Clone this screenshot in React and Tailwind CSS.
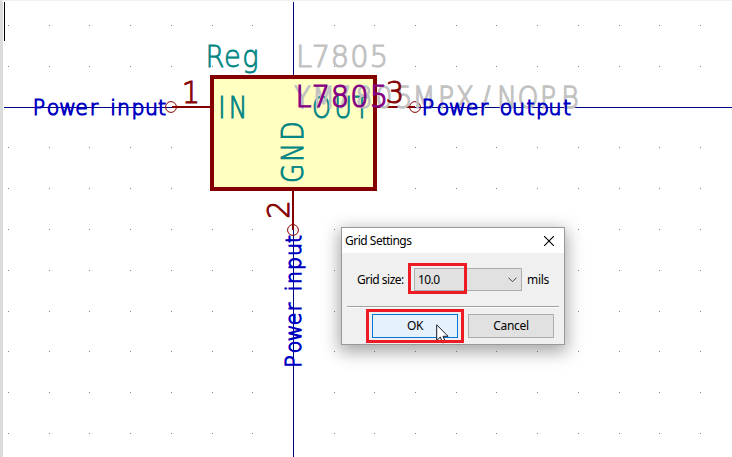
const GRID_COLS = Array.from({ length: 18 }, (_, i) => Math.round(8 + i * 40.7));
const GRID_ROWS = [25, 66, 147, 188, 229, 270, 311, 351, 392, 433];

// Lettering with one centre coordinate per character, run along the x axis
// or, when vertical, upwards along the y axis.
function Lettering({ text, at, base, color, size = 31, weight = 1, vertical = false, stretch = 0.93 }) {
  const xs = at.map((v) => (vertical ? -v : v) / stretch).join(' ');
  const transform = vertical
    ? `translate(${base} 0) rotate(-90) scale(${stretch} 1)`
    : `translate(0 ${base}) scale(${stretch} 1)`;
  return (
    <text
      x={xs}
      y="0"
      transform={transform}
      textAnchor="middle"
      fontSize={size}
      fill={color}
      stroke={color}
      strokeWidth={weight}
      className="font-['DejaVu_Sans',sans-serif] font-extralight whitespace-pre"
    >
      {text}
    </text>
  );
}

function Schematic() {
  return (
    <svg width="732" height="457" viewBox="0 0 732 457" className="block">
      <g fill="#848484" shapeRendering="crispEdges">
        {GRID_ROWS.map((y) => GRID_COLS.map((x) => <rect key={`${x}-${y}`} x={x} y={y} width="1" height="1" />))}
      </g>
      <g shapeRendering="crispEdges">
        <rect x="212" y="77" width="163" height="112" fill="#ffffc2" stroke="#840000" strokeWidth="4" />
        <rect x="4" y="107" width="168" height="1" fill="#000084" />
        <rect x="415" y="107" width="317" height="1" fill="#000084" />
        <rect x="293" y="2" width="1" height="73" fill="#000084" />
        <rect x="293" y="230" width="1" height="227" fill="#000084" />
        <rect x="172" y="106" width="39" height="2" fill="#840000" />
        <rect x="376" y="106" width="39" height="2" fill="#840000" />
        <rect x="292" y="190" width="2" height="40" fill="#840000" />
        <rect x="4" y="2" width="1" height="39" fill="#000" />
      </g>
      <g fill="none" stroke="#840000">
        <circle cx="171" cy="107" r="5.4" />
        <circle cx="415" cy="107" r="5.4" />
        <circle cx="293" cy="230" r="5.4" />
      </g>
      <Lettering text="Reg" at={[215, 232.5, 250.5]} base={66.5} color="#008484" weight={0.8} stretch={0.88} />
      <Lettering text="IN" at={[222, 238]} base={118} color="#008484" stretch={0.8} />
      <Lettering text="OUT" at={[321.5, 343, 362]} base={118} color="#008484" stretch={0.78} />
      <Lettering text="GND" at={[173.5, 152.5, 131]} base={303} color="#008484" vertical stretch={0.8} />
      <Lettering text="L7805" at={[304, 321, 340, 359.5, 379]} base={67} color="#c2c2c2" weight={1.2} />
      <Lettering
        text="YM7805MPX/NOPB"
        at={[302.5, 323.5, 343, 364, 384, 404, 424, 446, 465, 486, 507, 528, 548, 570]}
        base={107.5}
        color="#c2c2c2"
        weight={1.3}
        stretch={0.86}
      />
      <Lettering text="L7805" at={[303.5, 321, 340, 359.5, 379]} base={107} color="#840084" weight={1.2} />
      <Lettering text="1" at={[191]} base={103} color="#840000" />
      <Lettering text="3" at={[395]} base={103} color="#840000" />
      <Lettering text="2" at={[209.5]} base={289} color="#840000" vertical />
      <Lettering
        text="Power input"
        at={[39, 53, 67.5, 81.5, 94, 104, 113, 123.5, 138, 151.5, 162]}
        base={114.5}
        color="#0000c2"
        size={22}
        weight={1.2}
      />
      <Lettering
        text="Power output"
        at={[428, 443, 457.5, 472, 484, 494, 506, 518.5, 530.5, 542.5, 555, 567]}
        base={114.5}
        color="#0000c2"
        size={22}
        weight={1.2}
      />
      <Lettering
        text="Power input"
        at={[361.5, 347, 333, 319, 307, 297, 288.5, 277.5, 263.5, 249.5, 239]}
        base={300.5}
        color="#0000c2"
        size={22}
        weight={1.2}
        vertical
      />
    </svg>
  );
}

function GridSettings() {
  return (
    <div className="absolute left-[341px] top-[227px] flex h-[118px] w-[224px] flex-col border border-[#999] bg-[#f0f0f0] font-['Noto_Sans',sans-serif] text-[12px] leading-none text-black shadow-[0_5px_16px_2px_rgba(0,0,0,0.35)]">
      <div className="flex h-[25px] shrink-0 items-center justify-between bg-white pl-[3px] pr-[10px]">
        <span className="tracking-[-0.5px]">Grid Settings</span>
        <svg width="10" height="10" viewBox="0 0 10 10" stroke="#000" strokeWidth="1.1">
          <path d="M0 0 10 10M10 0 0 10" />
        </svg>
      </div>
      <div className="mt-[15px] flex h-[23px] shrink-0 items-center pl-[15px]">
        <span className="w-[57px] tracking-[-0.5px]">Grid size:</span>
        <div className="relative flex h-[23px] w-[108px] items-center justify-between border border-[#adadad] bg-[#e1e1e1] pl-[3px] pr-[4px]">
          <span className="tracking-[-0.6px]">10.0</span>
          <svg width="9" height="6" viewBox="0 0 9 6" fill="none" stroke="#444">
            <path d="M.5.7 4.5 4.7 8.5.7" />
          </svg>
          <div className="absolute -left-[7px] -top-[6px] h-[31px] w-[59px] border-3 border-[#ed1c24]" />
        </div>
        <span className="ml-[5px] tracking-[-0.3px]">mils</span>
      </div>
      <div className="ml-[5px] mt-[15px] h-[2px] w-[212px] shrink-0 border-b border-white bg-[#a0a0a0]" />
      <div className="mt-[6px] flex gap-[10px] pl-[30px]">
        <div className="relative flex h-[24px] w-[86px] items-center justify-center border border-[#0078d7] bg-[#e5f1fb]">
          <span className="tracking-[-0.4px]">OK</span>
          <svg width="13" height="20" viewBox="0 0 13 20" className="absolute left-[63px] top-[9px]">
            <path d="M.7.8V16.5L4.3 13.1 6.8 19 9.4 17.9 7 12.3H12Z" fill="#fff" stroke="#111827" strokeWidth="1" />
          </svg>
          <div className="absolute -left-[7px] -top-[6px] h-[34px] w-[98px] border-3 border-[#ed1c24]" />
        </div>
        <div className="flex h-[24px] w-[86px] items-center justify-center border border-[#adadad] bg-[#e1e1e1]">
          <span className="tracking-[-0.3px]">Cancel</span>
        </div>
      </div>
    </div>
  );
}

export default function App() {
  return (
    <div className="relative h-[457px] w-[732px] overflow-hidden border-l-3 border-t border-l-[#dcdcdc] border-t-[#f0f0f0] bg-white">
      <div className="-ml-[3px] -mt-px">
        <Schematic />
      </div>
      <div className="absolute -left-[3px] -top-px">
        <GridSettings />
      </div>
    </div>
  );
}
